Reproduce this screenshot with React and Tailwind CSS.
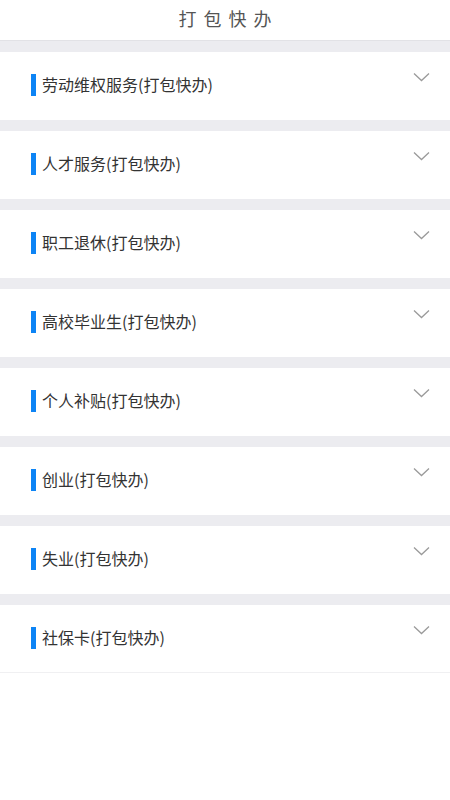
import React from "react";

const items = [
  "劳动维权服务(打包快办)",
  "人才服务(打包快办)",
  "职工退休(打包快办)",
  "高校毕业生(打包快办)",
  "个人补贴(打包快办)",
  "创业(打包快办)",
  "失业(打包快办)",
  "社保卡(打包快办)",
];

function Chevron() {
  return (
    <svg width="17" height="10" viewBox="0 0 17 10" fill="none">
      <path d="M1 1.5L8.5 8.5L16 1.5" stroke="#9a9a9a" strokeWidth="1.3" />
    </svg>
  );
}

export default function App() {
  return (
    <div
      className="w-[450px] min-h-[800px] bg-white"
      style={{ fontFamily: '"Noto Sans CJK SC", "Noto Sans", sans-serif' }}
    >
      <div className="h-[41px] flex items-center justify-center border-b border-[#e2e2e6] pb-[4px]">
        <span className="text-[18px] text-[#555555] tracking-[7px] pl-[7px] leading-none">打包快办</span>
      </div>
      {items.map((t, i) => (
        <div key={i}>
          <div className="h-[11px] bg-[#ececf0]" />
          <div
            className={
              "h-[68px] flex items-start pl-[31px] pr-[20px] " +
              (i === items.length - 1 ? "border-b border-[#f0f0f2]" : "")
            }
          >
            <div className="flex items-center mt-[22px]">
              <div className="w-[5px] h-[22px] bg-[#0d84f5] mr-[6px]" />
              <span className="text-[16px] text-[#333333] leading-none -mt-[2px]">{t}</span>
            </div>
            <div className="ml-auto mt-[20px]">
              <Chevron />
            </div>
          </div>
        </div>
      ))}
    </div>
  );
}
